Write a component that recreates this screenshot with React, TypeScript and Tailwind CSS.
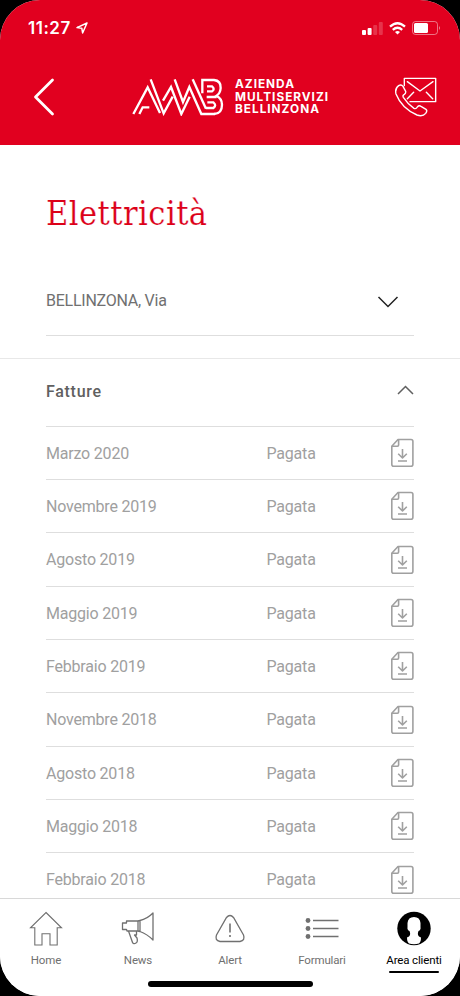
import { ReactNode } from 'react'

type Invoice = {
    month: string,
    status: string
}

const invoices: Invoice[] = [
    { month: 'Marzo 2020', status: 'Pagata' },
    { month: 'Novembre 2019', status: 'Pagata' },
    { month: 'Agosto 2019', status: 'Pagata' },
    { month: 'Maggio 2019', status: 'Pagata' },
    { month: 'Febbraio 2019', status: 'Pagata' },
    { month: 'Novembre 2018', status: 'Pagata' },
    { month: 'Agosto 2018', status: 'Pagata' },
    { month: 'Maggio 2018', status: 'Pagata' },
    { month: 'Febbraio 2018', status: 'Pagata' },
]

function StatusBar(){
    return(
        <div className="flex h-[54px] items-center justify-between pl-7 pr-[19px] pt-[2px]">
            <div className="flex items-center gap-[5px]">
                <span className="font-['Inter'] text-[17px] font-semibold leading-5 tracking-[0.5px]">11:27</span>
                <svg width="12" height="12" viewBox="0 0 12 12" fill="none" stroke="currentColor" strokeWidth="1.5" strokeLinejoin="round">
                    <path d="M11 1 L1 5.6 L5.8 6.2 L6.6 11 Z"/>
                </svg>
            </div>
            <div className="flex items-center gap-[6px]">
                <svg width="21" height="14" viewBox="0 0 21 14" fill="currentColor">
                    <rect x="0" y="9" width="4" height="5" rx="1"/>
                    <rect x="5.6" y="7" width="4" height="7" rx="1"/>
                    <rect x="11.2" y="4" width="4" height="10" rx="1" opacity=".2"/>
                    <rect x="16.8" y="1" width="4" height="13" rx="1" opacity=".2"/>
                </svg>
                <svg width="17" height="13" viewBox="0 0 17 13" fill="none" stroke="currentColor" strokeWidth="2.3">
                    <path d="M1 4.7 Q8.5 -2.2 16 4.7"/>
                    <path d="M3.8 7.8 Q8.5 3.6 13.2 7.8"/>
                    <path d="M6 9.9 Q8.5 7.9 11 9.9 L8.5 12.6 Z" fill="currentColor" stroke="none"/>
                </svg>
                <svg width="29" height="14" viewBox="0 0 29 14">
                    <rect x=".5" y=".5" width="25" height="13" rx="3" fill="none" stroke="currentColor" opacity=".45"/>
                    <rect x="2" y="2" width="14" height="10" rx="1.5" fill="currentColor"/>
                    <path d="M27 5 Q29 7 27 9 Z" fill="currentColor" opacity=".5"/>
                </svg>
            </div>
        </div>
    )
}

function Logo(){
    return(
        <div className="flex items-center">
            <svg width="92" height="38" viewBox="0 0 276 114" fill="none" stroke="currentColor" strokeWidth="7">
                <path d="M4 108 L47 28 L84 105"/>
                <path d="M22 108 L32 88 L52 88"/>
                <path d="M56 4 L95 106 L122 56"/>
                <path d="M93 68 L117 27 L148 108 L173 56"/>
                <path d="M128 4 L153 72 L172 27 L208 108 H248"/>
                <path d="M182 4 L222 92"/>
                <path d="M211 46 V6 H246 Q267 8 266 30 Q265 46 253 54 Q270 61 270 80 Q270 107 246 108"/>
                <path d="M225 25 H240 Q250 33 240 40 H225"/>
                <path d="M224 57 H254"/>
                <path d="M226 73 H244 Q255 82 244 90 H222"/>
            </svg>
            <div className="ml-[11px] font-['Inter'] text-[11.8px] font-bold leading-[12.5px] tracking-[1px]">
                <p>AZIENDA</p>
                <p>MULTISERVIZI</p>
                <p>BELLINZONA</p>
            </div>
        </div>
    )
}

function Header(){
    return(
        <header className="h-[144.5px] shrink-0 bg-[#e1001f] text-white">
            <StatusBar/>
            <div className="mt-[22px] flex h-[42px] items-center pl-[33px] pr-[23px]">
                <svg width="22" height="38" viewBox="0 0 22 38" fill="none" stroke="currentColor" strokeWidth="2.8" strokeLinecap="round" strokeLinejoin="round">
                    <path d="M19.5 2 L2.5 19 L19.5 36"/>
                </svg>
                <div className="ml-[77px]">
                    <Logo/>
                </div>
                <svg className="ml-auto" width="43" height="40" viewBox="0 0 129 120" fill="none" stroke="currentColor" strokeWidth="4.2" strokeLinejoin="round" strokeLinecap="round">
                    <path d="M31 26 V4 H125 V74 H48"/>
                    <path d="M40 14 L78 42 L117 14"/>
                    <path d="M40 65 L59 46"/>
                    <path d="M97 46 L116 65"/>
                    <path d="M14 26 Q22 21 27 28 L35 43 Q36 49 31 52 Q25 55 28 61 Q42 82 60 94 Q66 97 70 90 Q75 84 81 88 L96 97 Q101 101 95 109 Q86 120 69 114 Q23 94 6 51 Q2 34 14 26 Z"/>
                </svg>
            </div>
        </header>
    )
}

function InvoiceRow({month, status}: Invoice){
    return(
        <div className="flex h-[53.35px] shrink-0 items-center border-b border-[#dedede] text-base tracking-[-0.2px] text-[#a0a0a0]">
            <p className="w-[220.5px] pt-[1.4px]">{month}</p>
            <p className="pt-[1.4px]">{status}</p>
            <svg className="ml-auto" width="24" height="30" viewBox="0 0 24 30" fill="none" stroke="currentColor" strokeWidth="1.6" strokeLinejoin="round">
                <path d="M8 1.5 H21 Q22.9 1.5 22.9 3.2 V26.3 Q22.9 28.3 21 28.3 H3.6 Q1.8 28.3 1.8 26.3 V8.2 Z"/>
                <path d="M8.6 1.5 V7 Q8.6 8.2 7.4 8.2 H1.8"/>
                <path d="M12.5 11 V19.5 M8.2 15.8 L12.5 20 L16.8 15.8 M8 23 H17"/>
            </svg>
        </div>
    )
}

function NavItem({label, active, children}: {label: string, active?: boolean, children: ReactNode}){
    return(
        <div className={active ? 'flex w-[92px] flex-col items-center text-black' : 'flex w-[92px] flex-col items-center text-[#707070]'}>
            <div className="flex h-[36px] items-center">{children}</div>
            <p className="mt-[5px] text-[11.5px] leading-4 tracking-[-0.15px]">{label}</p>
            {active && <div className="mt-[3px] h-[2px] w-[50px] rounded-full bg-black"></div>}
        </div>
    )
}

function BottomNav(){
    return(
        <nav className="flex h-[98px] shrink-0 flex-col items-center border-t border-[#d8d8d8] bg-white">
            <div className="flex h-[81px] w-full pt-[12px]">
                <NavItem label="Home">
                    <svg width="34" height="36" viewBox="0 0 34 36" fill="none" stroke="currentColor" strokeWidth="1.1">
                        <path d="M17 1.5 L32.5 16.8 H28.2 V34 H21 V22.8 H13 V34 H5.8 V16.8 H1.5 Z"/>
                    </svg>
                </NavItem>
                <NavItem label="News">
                    <svg width="34" height="36" viewBox="0 0 34 36" fill="none" stroke="currentColor" strokeWidth="1.3" strokeLinejoin="round">
                        <path d="M17 10 H5.5 V12 H1.5 V18.5 H5.5 L6 20 H17 Z"/>
                        <path d="M17 10 L19 9.5 Q26 8 32 2 V29 Q26 23 19 20.5 L17 20 M19 9.5 V20.5"/>
                        <path d="M7.5 20 L11 30 Q12 34 15 32 Q17 31 16 27 L13.5 24 H15.5 V20"/>
                    </svg>
                </NavItem>
                <NavItem label="Alert">
                    <svg width="32" height="36" viewBox="0 0 32 36" fill="none" stroke="currentColor" strokeWidth="1.3">
                        <path d="M12.5 6.5 Q16 2.5 19.5 6.5 L29.5 24 Q31.5 29.5 26 30.5 H6 Q.5 29.5 2.5 24 Z"/>
                        <path d="M16 12.5 V21.5 M16 24 V26" strokeWidth="1.6"/>
                    </svg>
                </NavItem>
                <NavItem label="Formulari">
                    <svg width="34" height="36" viewBox="0 0 34 36" fill="currentColor">
                        <circle cx="3" cy="9.5" r="2.4"/>
                        <circle cx="3" cy="17.5" r="2.4"/>
                        <circle cx="3" cy="25.5" r="2.4"/>
                        <path d="M8 9.5 H33.5 M8 17.5 H33.5 M8 25.5 H33.5" stroke="currentColor" strokeWidth="1.4"/>
                    </svg>
                </NavItem>
                <NavItem label="Area clienti" active>
                    <svg width="34" height="36" viewBox="0 0 34 36">
                        <circle cx="17" cy="17.5" r="16.7" fill="black"/>
                        <path d="M10.5 12 Q11 6 17 6 Q23 6 23.5 12 V16 Q24 19 21.5 20 Q20.5 22 21 24 Q21.5 25.5 24 26.5 Q24 31 22 32.5 Q17 34 12 32.5 Q10 31 10 26.5 Q12.5 25.5 13 24 Q13.5 22 12.5 20 Q10 19 10.5 16 Z" fill="white"/>
                    </svg>
                </NavItem>
            </div>
            <div className="mt-[1px] h-[5.5px] w-[165px] rounded-full bg-black"></div>
        </nav>
    )
}

export default function App(){
    return(
        <div className="h-[996px] w-[460px] bg-black font-['Roboto',sans-serif]">
            <div className="flex h-full flex-col overflow-hidden rounded-[40px] bg-white">
                <Header/>
                <main className="flex min-h-0 flex-1 flex-col overflow-hidden">
                    <div className="flex h-[214.5px] shrink-0 flex-col border-b border-[#e8e8e8] pl-[46px] pr-[46px]">
                        <h1 className="mt-[44.5px] font-['DejaVu_Serif_Condensed','DejaVu_Serif',serif] text-[34px] leading-[48px] tracking-[0.45px] text-[#dc0018] [-webkit-text-stroke:0.2px_white]">Elettricità</h1>
                        <div className="mt-[30px] flex h-[69px] items-center justify-between border-b border-[#dedede] text-base tracking-[-0.25px] text-[#707070]">
                            <p>BELLINZONA, Via</p>
                            <svg className="mr-[15px] mt-[2px]" width="22" height="14" viewBox="0 0 22 14" fill="none" stroke="#222222" strokeWidth="1.5">
                                <path d="M1.5 2 L11 11.5 L20.5 2"/>
                            </svg>
                        </div>
                    </div>
                    <div className="flex flex-col px-[46px]">
                        <div className="flex h-[67.7px] shrink-0 items-center justify-between border-b border-[#dedede] text-[#606060]">
                            <h2 className="text-base font-medium tracking-[0.7px]">Fatture</h2>
                            <svg className="mb-[4px]" width="17" height="10" viewBox="0 0 17 10" fill="none" stroke="currentColor" strokeWidth="1.5">
                                <path d="M1 9 L8.5 1.5 L16 9"/>
                            </svg>
                        </div>
                        {
                            invoices.map((invoice) => (
                                <InvoiceRow key={invoice.month} {...invoice}/>
                            ))
                        }
                    </div>
                </main>
                <BottomNav/>
            </div>
        </div>
    )
}
